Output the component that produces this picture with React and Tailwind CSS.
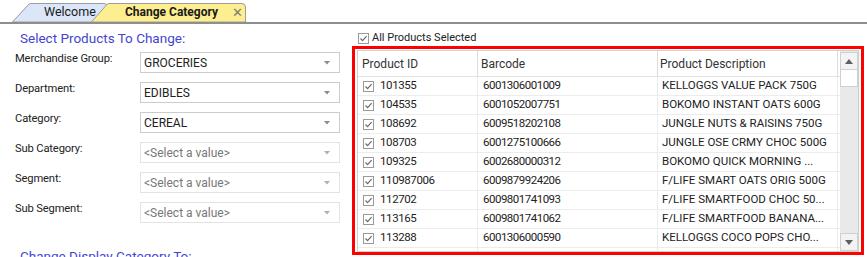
import React from "react";

const rows = [
  ["101355", "6001306001009", "KELLOGGS VALUE PACK 750G"],
  ["104535", "6001052007751", "BOKOMO INSTANT OATS 600G"],
  ["108692", "6009518202108", "JUNGLE NUTS & RAISINS 750G"],
  ["108703", "6001275100666", "JUNGLE OSE CRMY CHOC 500G"],
  ["109325", "6002680000312", "BOKOMO QUICK MORNING ..."],
  ["110987006", "6009879924206", "F/LIFE SMART OATS ORIG 500G"],
  ["112702", "6009801741093", "F/LIFE SMARTFOOD CHOC 50..."],
  ["113165", "6009801741062", "F/LIFE SMARTFOOD BANANA..."],
  ["113288", "6001306000590", "KELLOGGS COCO POPS CHO..."],
];

const fields = [
  ["Merchandise Group:", "GROCERIES", true],
  ["Department:", "EDIBLES", true],
  ["Category:", "CEREAL", true],
  ["Sub Category:", "<Select a value>", false],
  ["Segment:", "<Select a value>", false],
  ["Sub Segment:", "<Select a value>", false],
];

function Check() {
  return (
    <span className="flex h-[11px] w-[11px] shrink-0 items-center justify-center border border-[#9a9a9a] bg-white">
      <svg width="9" height="9" viewBox="0 0 9 9">
        <path d="M1.5 4.5 L3.6 6.6 L7.6 2.2" fill="none" stroke="#6a6a6a" strokeWidth="1.2" />
      </svg>
    </span>
  );
}

function Arrow({ color = "#8a8a8a" }) {
  return (
    <svg width="6" height="4" viewBox="0 0 6 4">
      <path d="M0 0 L6 0 L3 3.5 Z" fill={color} />
    </svg>
  );
}

export default function App() {
  return (
    <div className="relative h-[257px] w-[867px] overflow-hidden bg-white font-['Roboto',sans-serif] text-[#222]">
      {/* Tab strip */}
      <div className="relative h-[24px] border-b-2 border-[#8e8e8e]">
        <svg className="absolute left-0 top-0" width="867" height="22" viewBox="0 0 867 22">
          <path d="M12.5 22 L29 4 Q30 3.5 32 3.5 L104 3.5 Q107.5 3.5 107.5 7 L107.5 22 Z" fill="#dbe6f9" stroke="#9c9c9c" />
          <path d="M91.5 22 L107 4.3 Q108 3.5 110 3.5 L242 3.5 Q245.5 3.5 245.5 7 L245.5 22 Z" fill="#fdef90" stroke="#9c9c9c" />
        </svg>
        <div className="relative flex h-[22px] items-center pt-[2px] text-[12.5px]">
          <span className="w-[125px] pl-[44px] text-[#1a1a1a]">Welcome</span>
          <span className="w-[107px] text-[12px] font-bold text-[#1a1a1a]">Change Category</span>
          <span className="text-[13px] leading-none text-[#7a7a7a]">✕</span>
        </div>
      </div>

      <div className="flex">
        {/* Left panel */}
        <div className="w-[352px] shrink-0">
          <div className="mt-[6px] pl-[20px] text-[13.5px] leading-[17px] text-[#4545cf]">Select Products To Change:</div>
          <div className="mt-[5px] flex flex-col">
            {fields.map(([label, value, enabled]) => (
              <div key={label} className="flex h-[30px] items-start">
                <div className="w-[140px] pl-[15px] text-[11.2px] leading-[14px] tracking-[-0.15px]">{label}</div>
                <div
                  className={`flex h-[21px] w-[200px] items-center justify-between border pl-[3px] pr-[9px] text-[12px] ${
                    enabled ? "border-[#cccccc] text-[#222]" : "border-[#e3e3e3] text-[#777]"
                  }`}
                >
                  <span>{value}</span>
                  <Arrow color={enabled ? "#8a8a8a" : "#b0b0b0"} />
                </div>
              </div>
            ))}
          </div>
          <div className="mt-[16px] pl-[20px] text-[13.5px] leading-[17px] text-[#4545cf]">Change Display Category To:</div>
        </div>

        {/* Right panel */}
        <div className="flex flex-col">
          <div className="mt-[8px] flex h-[13px] items-center gap-[3px] pl-[6px] text-[11px]">
            <Check />
            <span>All Products Selected</span>
          </div>
          <div className="mt-[1px] h-[209px] w-[512px] border-[3px] border-[#ff0000] px-[2px] pt-[1px]">
            <div className="flex h-[202px] w-[502px] border border-[#cfcfcf] bg-white">
              <div className="flex w-[482px] flex-col overflow-hidden">
                <div className="grid h-[26px] shrink-0 grid-cols-[120px_180px_180px] border-b border-[#e2e2e2] text-[12px] text-[#333]">
                  <div className="flex items-center border-r border-[#dcdcdc] pl-[4px]">Product ID</div>
                  <div className="flex items-center border-r border-[#dcdcdc] pl-[3px]">Barcode</div>
                  <div className="flex items-center border-r border-[#dcdcdc] pl-[2px]">Product Description</div>
                </div>
                {rows.concat([["", "", ""]]).map(([id, bc, desc], i) => (
                  <div key={i} className="grid h-[19px] shrink-0 grid-cols-[120px_180px_180px] border-b border-[#ececec] text-[11.5px] text-[#222]">
                    <div className="flex items-center gap-[6px] border-r border-[#ececec] pl-[5px]">
                      {id && <Check />}
                      <span className="tracking-[-0.4px]">{id}</span>
                    </div>
                    <div className="flex items-center border-r border-[#ececec] pl-[5px] tracking-[-0.5px]">{bc}</div>
                    <div className="flex items-center border-r border-[#ececec] pl-[4px]">{desc}</div>
                  </div>
                ))}
              </div>
              <div className="ml-auto flex w-[18px] flex-col bg-[#e9e9e9] pt-[1px]">
                <div className="flex h-[18px] items-center justify-center border border-[#d0d0d0] bg-[#f3f3f3]">
                  <svg width="8" height="5" viewBox="0 0 8 5"><path d="M0 5 L4 0 L8 5 Z" fill="#606060" /></svg>
                </div>
                <div className="h-[17px] border border-t-0 border-[#d0d0d0] bg-white" />
                <div className="flex-1" />
                <div className="flex h-[18px] items-center justify-center border border-[#d0d0d0] bg-[#f3f3f3]">
                  <svg width="8" height="5" viewBox="0 0 8 5"><path d="M0 0 L8 0 L4 5 Z" fill="#606060" /></svg>
                </div>
              </div>
            </div>
          </div>
        </div>
      </div>
    </div>
  );
}
